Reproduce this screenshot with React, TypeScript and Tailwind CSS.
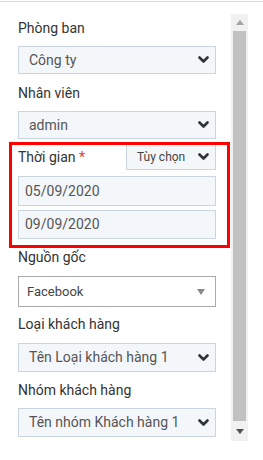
import React from "react";

const font = { fontFamily: "Roboto, 'Noto Sans', sans-serif" };

function Chevron() {
  return (
    <svg width="11" height="8" viewBox="0 0 11 8" className="shrink-0">
      <polyline
        points="1.5,1.5 5.5,5.5 9.5,1.5"
        fill="none"
        stroke="#2f3438"
        strokeWidth="2.6"
        strokeLinecap="round"
        strokeLinejoin="round"
      />
    </svg>
  );
}

function Label({ children }: { children: React.ReactNode }) {
  return <div className="h-5 text-[14px] leading-5 text-[#333]">{children}</div>;
}

function FakeSelect({ value, h = "h-[28px]" }: { value: string; h?: string }) {
  return (
    <div
      className={`flex ${h} items-center justify-between border border-[#cbd5df] bg-[#f4f7fa] pl-[10px] pr-[6px] text-[14px] text-[#555]`}
    >
      <span>{value}</span>
      <Chevron />
    </div>
  );
}

function DateInput({ value, h }: { value: string; h: string }) {
  return (
    <div
      className={`flex ${h} items-center border border-[#cbd5df] bg-[#f4f7fa] pl-[6px] text-[14px] text-[#555]`}
    >
      {value}
    </div>
  );
}

export default function App() {
  return (
    <div className="h-[460px] w-[263px] overflow-hidden bg-white" style={font}>
      <div className="mt-px h-px w-full bg-[#d6dade]" />
      <div className="flex">
        <div className="w-[231px] pl-[18px] pr-[15px] pt-[16px]">
          <Label>Phòng ban</Label>
          <div className="mt-2">
            <FakeSelect value="Công ty" />
          </div>

          <div className="mt-[9px]">
            <Label>Nhân viên</Label>
          </div>
          <div className="mt-2">
            <FakeSelect value="admin" />
          </div>

          <div className="relative mt-[4px]">
            <div className="pointer-events-none absolute -left-[9px] -right-[14px] -top-[1px] -bottom-[9px] border-[3px] border-[#f00]" />
            <div className="flex items-center justify-between">
              <div className="text-[14px] leading-5 text-[#333]">
                Thời gian <span className="text-[#e53935]">*</span>
              </div>
              <div className="flex h-[27px] w-[90px] items-center justify-between border border-[#cbd5df] bg-[#f4f7fa] pl-[10px] pr-[6px] text-[12px] text-[#444]">
                <span>Tùy chọn</span>
                <Chevron />
              </div>
            </div>
            <div className="mt-[6px]">
              <DateInput value="05/09/2020" h="h-[30px]" />
            </div>
            <div className="mt-[4px]">
              <DateInput value="09/09/2020" h="h-[29px]" />
            </div>
          </div>

          <div className="mt-[8px]">
            <Label>Nguồn gốc</Label>
          </div>
          <div className="mt-[9px] flex h-[31px] items-center justify-between border border-[#aaa] bg-white pl-[8px] pr-[10px] text-[13px] text-[#444]">
            <span>Facebook</span>
            <svg width="8" height="6" viewBox="0 0 8 6">
              <polygon points="0,0 8,0 4,6" fill="#888" />
            </svg>
          </div>

          <div className="mt-[7px]">
            <Label>Loại khách hàng</Label>
          </div>
          <div className="mt-[9px]">
            <FakeSelect value="Tên Loại khách hàng 1" h="h-[29px]" />
          </div>

          <div className="mt-[8px]">
            <Label>Nhóm khách hàng</Label>
          </div>
          <div className="mt-[8px]">
            <FakeSelect value="Tên nhóm Khách hàng 1" h="h-[29px]" />
          </div>
        </div>

        <div className="mt-[12px] flex h-[427px] w-[17px] flex-col items-center bg-[#f1f1f1]">
          <div className="flex h-[17px] items-center justify-center">
            <svg width="8" height="5" viewBox="0 0 8 5">
              <polygon points="0,5 8,5 4,0" fill="#a3a3a3" />
            </svg>
          </div>
          <div className="h-[390px] w-[13px] bg-[#c1c1c1]" />
          <div className="flex h-[20px] items-center justify-center">
            <svg width="8" height="5" viewBox="0 0 8 5">
              <polygon points="0,0 8,0 4,5" fill="#505050" />
            </svg>
          </div>
        </div>
      </div>
    </div>
  );
}
